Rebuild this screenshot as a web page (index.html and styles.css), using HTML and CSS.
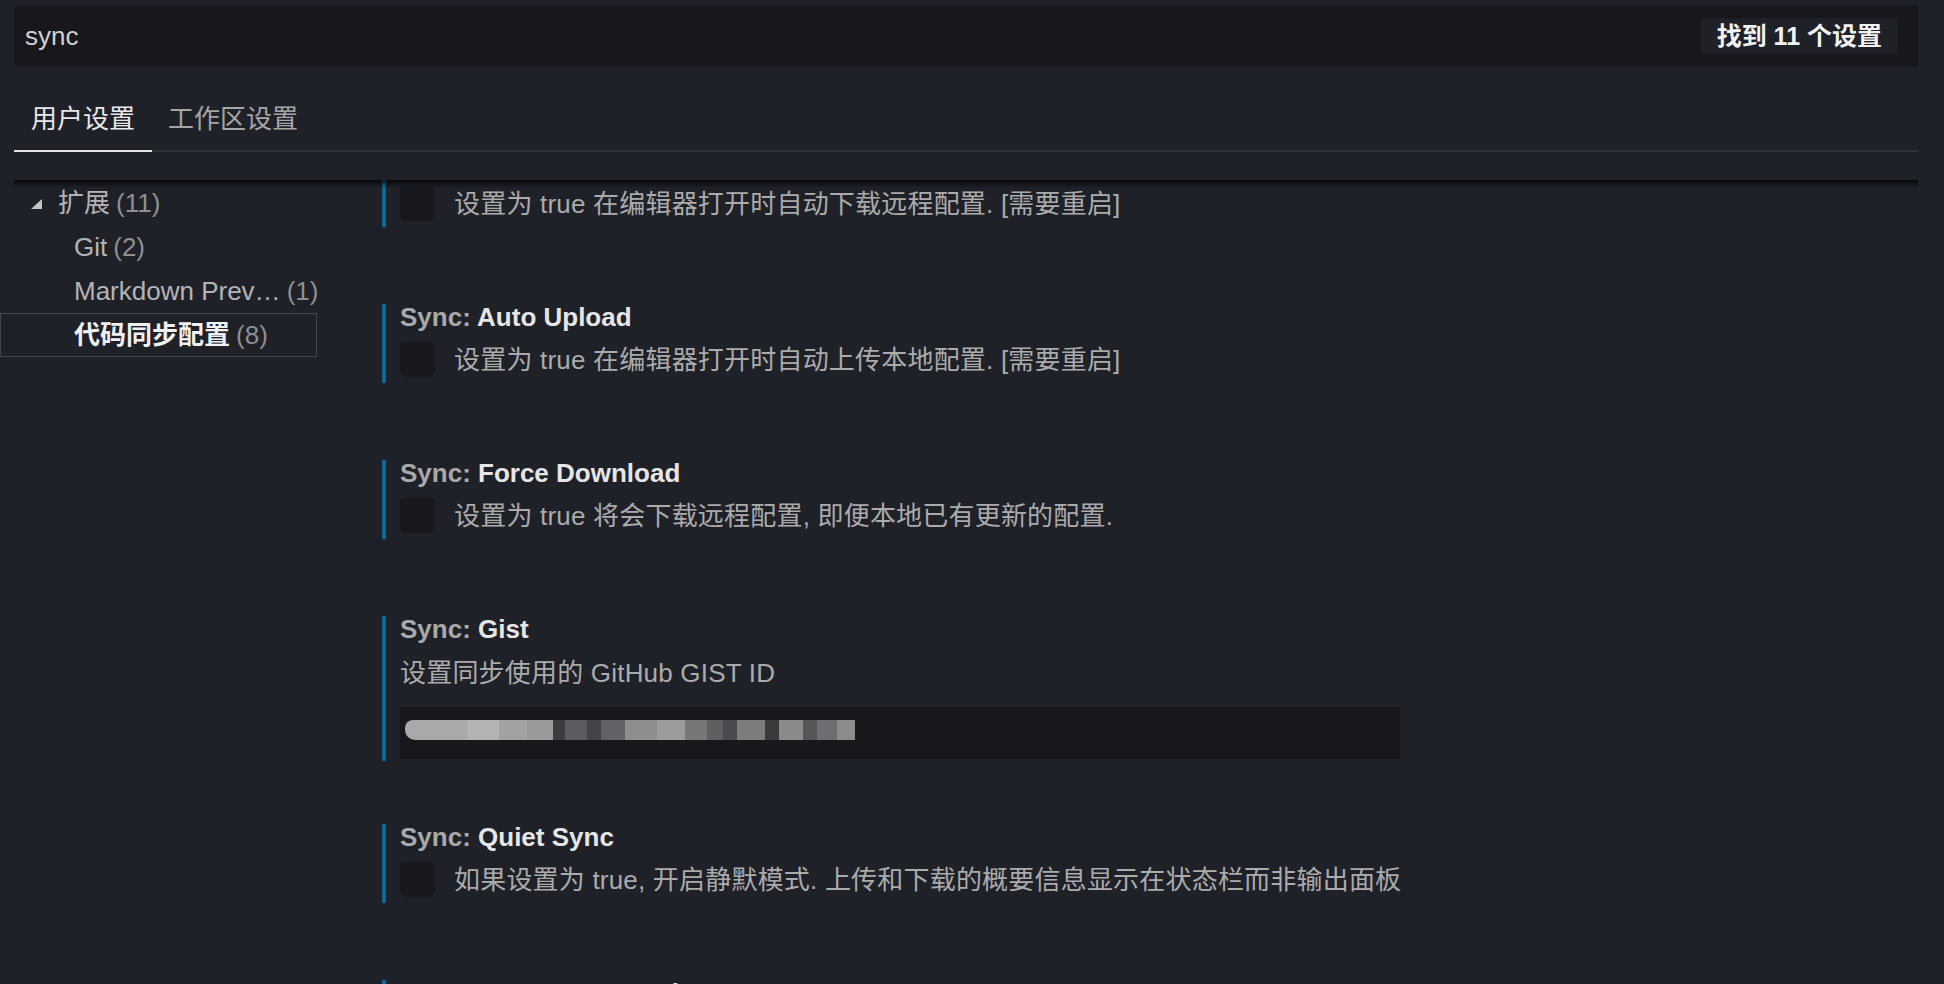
FILE: index.html
```html
<!DOCTYPE html>
<html lang="zh-CN">
<head>
<meta charset="utf-8">
<title>设置</title>
<link rel="stylesheet" href="styles.css">
</head>
<body>
<div class="header">
  <div class="search">
    <span class="search-text">sync</span>
    <span class="badge">找到 11 个设置</span>
  </div>
  <div class="tabs">
    <div class="tab active">用户设置</div>
    <div class="tab">工作区设置</div>
  </div>
</div>
<div class="main">
  <div class="sidebar">
    <div class="row parent">
      <svg class="twistie" width="11" height="10" viewBox="0 0 11 10"><polygon points="11,0 11,10 0,10" fill="#c5c5c5"/></svg>
      <span class="label">扩展</span><span class="count">(11)</span>
    </div>
    <div class="row child"><span class="label">Git</span><span class="count">(2)</span></div>
    <div class="row child"><span class="label">Markdown Prev…</span><span class="count">(1)</span></div>
    <div class="row child selected"><span class="label">代码同步配置</span><span class="count">(8)</span></div>
  </div>
  <div class="content">
    <div class="list">
      <div class="setting partial">
        <div class="bool-row"><span class="checkbox"></span><span class="desc">设置为 true 在编辑器打开时自动下载远程配置. [需要重启]</span></div>
      </div>
      <div class="setting">
        <div class="title"><span class="cat">Sync: </span><span class="name">Auto Upload</span></div>
        <div class="bool-row"><span class="checkbox"></span><span class="desc">设置为 true 在编辑器打开时自动上传本地配置. [需要重启]</span></div>
      </div>
      <div class="setting">
        <div class="title"><span class="cat">Sync: </span><span class="name">Force Download</span></div>
        <div class="bool-row"><span class="checkbox"></span><span class="desc">设置为 true 将会下载远程配置, 即便本地已有更新的配置.</span></div>
      </div>
      <div class="setting text-setting">
        <div class="title"><span class="cat">Sync: </span><span class="name">Gist</span></div>
        <div class="desc plain">设置同步使用的 GitHub GIST ID</div>
        <div class="input">
          <div class="mosaic">
            <i class="m1"></i><i class="m2"></i><i class="m3"></i><i class="m4"></i><i class="m5"></i><i class="m6"></i><i class="m7"></i><i class="m8"></i><i class="m9"></i><i class="m10"></i><i class="m11"></i><i class="m12"></i><i class="m13"></i><i class="m14"></i><i class="m15"></i><i class="m16"></i><i class="m17"></i><i class="m18"></i><i class="m19"></i>
          </div>
        </div>
      </div>
      <div class="setting">
        <div class="title"><span class="cat">Sync: </span><span class="name">Quiet Sync</span></div>
        <div class="bool-row"><span class="checkbox"></span><span class="desc">如果设置为 true, 开启静默模式. 上传和下载的概要信息显示在状态栏而非输出面板</span></div>
      </div>
      <div class="setting">
        <div class="title"><span class="cat">Sync: </span><span class="name">Remove Extensions</span></div>
      </div>
    </div>
  </div>
</div>
</body>
</html>
```

FILE: styles.css
```css
html, body {
  margin: 0;
  padding: 0;
  height: 100%;
  overflow: hidden;
}

body {
  background: #1f2129;
  font-family: "Liberation Sans", "Noto Sans CJK SC", sans-serif;
  font-size: 26px;
  color: #b0b0b0;
}

.header {
  padding: 6px 26px 0 14px;
}

.search {
  height: 60px;
  background: #18181c;
  display: flex;
  align-items: center;
  justify-content: space-between;
  padding: 0 20px 0 11px;
}

.search-text {
  color: #d0d0d0;
  font-size: 26px;
  line-height: 30px;
}

.badge {
  height: 36px;
  line-height: 36px;
  padding: 0 16px;
  background: #1f2129;
  border-radius: 4px;
  color: #f2f2f2;
  font-weight: 700;
  font-size: 25px;
}

.tabs {
  margin-top: 40px;
  display: flex;
  border-bottom: 2px solid #303136;
}

.tab {
  padding: 0 16px 18px;
  line-height: 26px;
  font-size: 26px;
  color: #a6a6a6;
  margin-bottom: -2px;
  border-bottom: 2px solid transparent;
}

.tab.active {
  padding: 0 17px 18px;
  color: #e8e8e8;
  border-bottom-color: #e4e4e4;
}

.main {
  position: relative;
  margin-top: 28px;
  display: flex;
  height: 804px;
}

.main::before {
  content: "";
  position: absolute;
  top: 0;
  left: 14px;
  right: 26px;
  height: 8px;
  background: linear-gradient(rgba(0, 0, 0, 0.75), rgba(0, 0, 0, 0));
  z-index: 2;
}

.sidebar {
  width: 317px;
  flex: none;
  padding-top: 1px;
}

.row {
  height: 44px;
  box-sizing: border-box;
  display: flex;
  align-items: center;
  font-size: 26px;
  line-height: 30px;
  white-space: nowrap;
}

.row .label {
  color: #b4b4b4;
}

.row .count {
  color: #8f8f8f;
  margin-left: 6px;
}

.row.parent {
  padding-left: 31px;
}

.twistie {
  margin-right: 16px;
  margin-top: 1px;
}

.row.child {
  padding-left: 74px;
}

.row.selected {
  border: 1px solid #45464a;
  padding-left: 73px;
}

.row.selected .label {
  color: #f0f0f0;
  font-weight: 700;
}

.content {
  flex: 1;
  overflow: hidden;
  padding-left: 65px;
}

.list {
  margin-top: 0;
}

.setting {
  border-left: 4px solid #0f6894;
  padding-left: 14px;
  padding-bottom: 6px;
  margin-bottom: 77px;
}

.setting.partial {
  padding-top: 6px;
}

.setting.partial .bool-row {
  margin-top: 0;
}

.title {
  line-height: 26px;
  height: 26px;
  font-size: 26px;
  font-weight: 700;
  white-space: nowrap;
}

.title .cat {
  color: #a9a9a9;
}

.title .name {
  color: #e6e6e6;
}

.bool-row {
  margin-top: 12px;
  display: flex;
  align-items: center;
  gap: 19px;
}

.checkbox {
  width: 35px;
  height: 35px;
  border-radius: 5px;
  background: #19191d;
  flex: none;
}

.desc {
  line-height: 26px;
  font-size: 26px;
  color: #ababab;
  white-space: nowrap;
  letter-spacing: 0.2px;
}

.text-setting {
  padding-bottom: 2px;
  margin-bottom: 63px;
}

.desc.plain {
  margin-top: 18px;
}

.input {
  margin-top: 21px;
  width: 1000px;
  height: 52px;
  background: #18181c;
  box-sizing: border-box;
  padding: 13px 0 0 5px;
}

.mosaic {
  display: flex;
  height: 20px;
}

.mosaic i {
  display: block;
  height: 20px;
}

.m1 { width: 62px; background: #a9a9a9; border-radius: 8px 0 0 10px; }
.m2 { width: 32px; background: #b3b3b3; }
.m3 { width: 28px; background: #a2a2a2; }
.m4 { width: 26px; background: #9a9a9a; }
.m5 { width: 12px; background: #3c3c40; }
.m6 { width: 22px; background: #5c5c60; }
.m7 { width: 14px; background: #444448; }
.m8 { width: 24px; background: #626266; }
.m9 { width: 32px; background: #8e8e8e; }
.m10 { width: 28px; background: #9c9c9c; }
.m11 { width: 22px; background: #777777; }
.m12 { width: 16px; background: #5f5f63; }
.m13 { width: 14px; background: #4a4a4e; }
.m14 { width: 28px; background: #7c7c7c; }
.m15 { width: 14px; background: #3a3a3e; }
.m16 { width: 24px; background: #8a8a8a; }
.m17 { width: 14px; background: #55555a; }
.m18 { width: 20px; background: #6e6e72; }
.m19 { width: 18px; background: #8c8c8c; }
```
